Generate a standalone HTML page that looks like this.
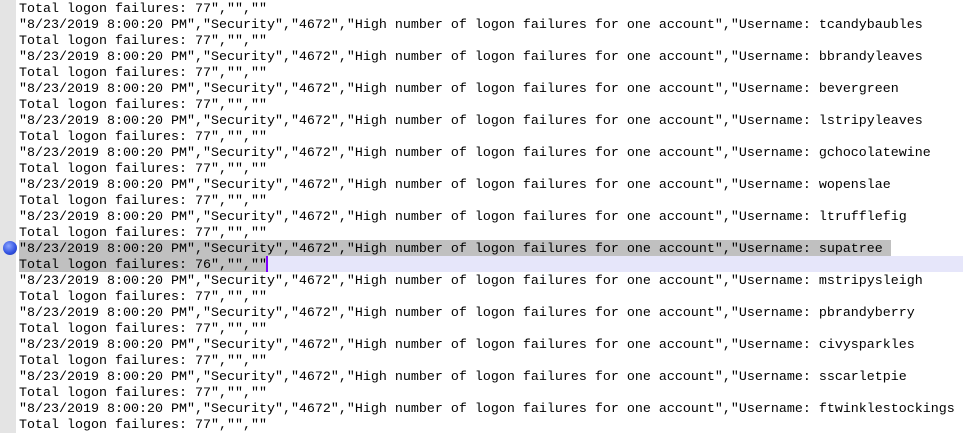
<!DOCTYPE html>
<html><head><style>
html,body{margin:0;padding:0;width:964px;height:433px;overflow:hidden;background:#fff}
#g{position:absolute;left:0;top:0;width:16px;height:433px;background:#e4e4e4}
.l{position:absolute;left:19px;height:16px;line-height:16px;font-family:"Liberation Mono",monospace;font-size:13.33px;color:#000;white-space:pre}
</style></head><body>
<div id="g"></div>
<div style="position:absolute;left:266px;top:256px;width:697px;height:16px;background:#e6e6fa"></div>
<div style="position:absolute;left:19px;top:240px;width:872px;height:16px;background:#c0c0c0"></div>
<div style="position:absolute;left:19px;top:256px;width:247px;height:16px;background:#c0c0c0"></div>
<div style="position:absolute;left:266px;top:256px;width:2px;height:16px;background:#8000ff"></div>
<div style="position:absolute;left:3px;top:241px;width:14px;height:14px;border-radius:50%;background:radial-gradient(circle at 40% 35%,#8aa4ff,#3050e0 60%,#1a30a0)"></div>
<div id="c"></div>
<script>
var names=["tcandybaubles","bbrandyleaves","bevergreen","lstripyleaves","gchocolatewine","wopenslae","ltrufflefig","supatree","mstripysleigh","pbrandyberry","civysparkles","sscarletpie","ftwinklestockings"];
var h='';var y=2;
function t(n){h+='<div class="l" style="top:'+y+'px">Total logon failures: '+n+'","",""</div>';y+=16;}
t(77);
names.forEach(function(n,i){h+='<div class="l" style="top:'+y+'px">"8/23/2019 8:00:20 PM","Security","4672","High number of logon failures for one account","Username: '+n+'</div>';y+=16;t(n=="supatree"?76:77);});
document.getElementById('c').innerHTML=h;
</script>
</body></html>
